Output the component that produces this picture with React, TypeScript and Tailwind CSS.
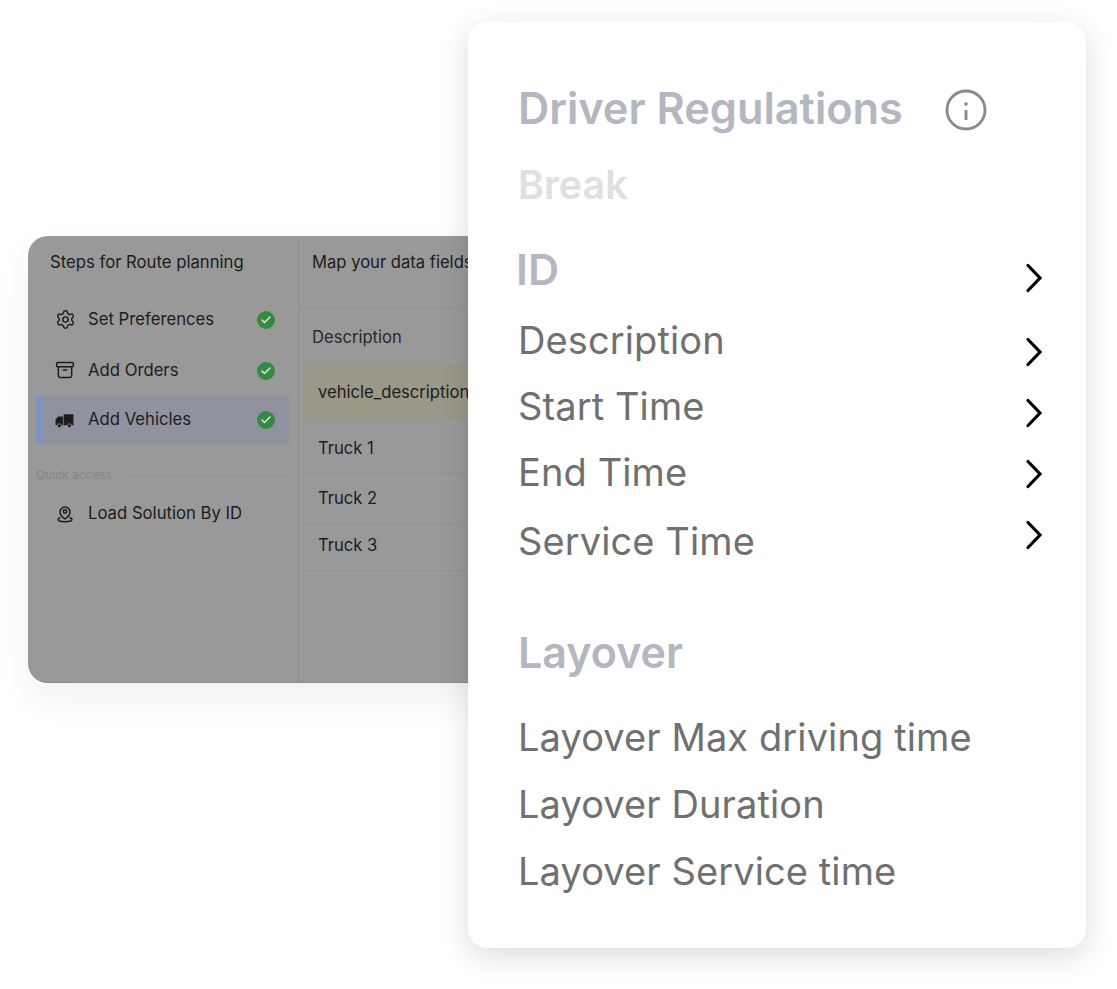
import { Settings, Archive, Check } from 'lucide-react';

const breakFields = [
  { label: 'Description', rowClass: 'mt-[15px]', chevronClass: 'mt-[24px]' },
  { label: 'Start Time', rowClass: '', chevronClass: 'mt-[14px]' },
  { label: 'End Time', rowClass: '', chevronClass: 'mt-[4px]' },
  { label: 'Service Time', rowClass: 'mt-[3px]', chevronClass: '-mt-[12px]' },
];

const layoverFields = ['Layover Max driving time', 'Layover Duration', 'Layover Service time'];

function DoneBadge({ className = '' }: { className?: string }) {
  return (
    <div className={`w-[18px] h-[18px] rounded-full bg-[#348a3f] flex items-center justify-center ${className}`}>
      <Check className="w-3 h-3 text-[#dfe6df]" strokeWidth={3} />
    </div>
  );
}

function Chevron({ className = '' }: { className?: string }) {
  return (
    <svg className={`w-[18px] h-[32px] text-black shrink-0 ${className}`} viewBox="0 0 18 32" fill="none" stroke="currentColor" strokeWidth="3.2" strokeLinecap="round" strokeLinejoin="miter">
      <path d="M3 3.5 15 16 3 28.5" />
    </svg>
  );
}

function TruckIcon() {
  return (
    <svg className="w-[19px] h-[19px] -ml-[1px] text-[#1c1c1c]" viewBox="0 0 18 18" fill="currentColor">
      <path d="M.5 8 3 5.2H7.5V13.5H.5z" />
      <path d="M8.2 3h9.3v10.5H8.2z" />
      <circle cx="4.2" cy="14" r="1.9" stroke="#90939f" strokeWidth="0.8" />
      <circle cx="13.6" cy="14" r="1.9" stroke="#90939f" strokeWidth="0.8" />
    </svg>
  );
}

function PinIcon() {
  return (
    <svg className="w-[18px] h-[18px] text-[#1c1c1c]" viewBox="0 0 18 18" fill="none" stroke="currentColor" strokeWidth="1.5">
      <path d="M9 14c-3-2-5-4-5-7a5 5 0 0 1 10 0c0 3-2 5-5 7z" />
      <circle cx="9" cy="6.5" r="1.7" />
      <path d="M4.5 12.5C3 13 2 13.7 2 14.6c0 1.3 3 2.2 7 2.2s7-.9 7-2.2c0-.9-1-1.6-2.5-2.1" />
    </svg>
  );
}

function StepList() {
  return (
    <div className="w-[271px] shrink-0 border-r border-[#8f8f8f] h-full text-[16.7px] text-[#1c1c1c]">
      <div className="h-[51px] mr-[9px] border-b border-[#949494] pl-[22px] pt-[4px] flex items-center">
        Steps for Route planning
      </div>
      <div className="h-[48px] mt-[8px] flex items-center pl-[28px] pr-[23px]">
        <Settings className="w-[21px] h-[21px] -ml-[1px] -mr-[2px]" strokeWidth={1.6} />
        <span className="ml-[14px] flex-1 pt-[1px]">Set Preferences</span>
        <DoneBadge className="mt-[2px]" />
      </div>
      <div className="h-[48px] mt-[3px] flex items-center pl-[28px] pr-[23px]">
        <Archive className="w-[20px] h-[20px] -ml-[1px] -mr-[1px]" strokeWidth={1.8} />
        <span className="ml-[14px] flex-1 pt-[2px]">Add Orders</span>
        <DoneBadge className="mt-[2px]" />
      </div>
      <div className="ml-[8px] mr-[8px] mt-[2px] h-[48px] bg-[#90939f] border-l-[7px] border-[#7f95bf] flex items-center pl-[13px] pr-[15px]">
        <TruckIcon />
        <span className="ml-[14px] flex-1">Add Vehicles</span>
        <DoneBadge />
      </div>
      <div className="ml-[8px] mr-[7px] mt-[23px] flex items-center">
        <span className="text-[12px] leading-[16px] text-[#858585]">Quick access</span>
        <div className="flex-1 ml-[11px] border-t border-[#929292]" />
      </div>
      <div className="mt-[18px] pl-[28px] flex items-center">
        <PinIcon />
        <span className="ml-[14px]">Load Solution By ID</span>
      </div>
    </div>
  );
}

function DataTable() {
  return (
    <div className="flex-1 min-w-0 whitespace-nowrap text-[16.6px] text-[#1c1c1c]">
      <div className="h-[73px] border-b border-[#929292] pl-[13px] pt-[14px] leading-[24px]">
        Map your data fields
      </div>
      <div className="pl-[13px] pt-[2px] h-[55px] flex items-center text-[#2a2a2a]">Description</div>
      <div className="ml-[5px] h-[56px] bg-[#9a9888] rounded-[3px] pl-[14px] flex items-center">
        vehicle_description
      </div>
      <div className="ml-[5px] pl-[14px] h-[54px] pt-[4px] border-b border-[#929292] flex items-center">
        Truck 1
      </div>
      <div className="ml-[5px] pl-[14px] h-[51px] pb-[2px] border-b border-[#929292] flex items-center">
        Truck 2
      </div>
      <div className="ml-[5px] pl-[14px] h-[46px] pb-[5px] border-b border-[#929292] flex items-center">
        Truck 3
      </div>
    </div>
  );
}

export default function App() {
  return (
    <div className="relative w-[1117px] h-[989px] bg-white overflow-hidden font-['Inter',sans-serif] pt-[236px] pl-[28px]">
      {/* window behind */}
      <div className="w-[470px] h-[447px] bg-[#999999] border-b border-[#8a8a8a] rounded-[20px] flex overflow-hidden shadow-[0_16px_36px_rgba(0,0,0,0.06)]">
        <StepList />
        <DataTable />
      </div>

      {/* front card */}
      <div className="absolute left-[468px] top-[22px] w-[618px] h-[926px] bg-white rounded-[20px] shadow-[0_8px_30px_rgba(0,0,0,0.14)] pl-[50px] pr-[43px] pt-[58px]">
        <div className="flex items-center h-[56px]">
          <span className="text-[43.3px] leading-[56px] font-semibold text-[#b4b6c0] whitespace-nowrap">Driver Regulations</span>
          <svg className="ml-[42px] w-[42px] h-[42px] mt-[3px] text-[#8a8a8a]" viewBox="0 0 42 42" fill="none" stroke="currentColor">
            <circle cx="21" cy="21" r="19" strokeWidth="2.8" />
            <path d="M21 21v10" strokeWidth="2.8" />
            <circle cx="21" cy="15" r="1.8" fill="currentColor" stroke="none" />
          </svg>
        </div>
        <div className="mt-[26px] text-[39.5px] leading-[46px] font-semibold text-[#e0e0e0]">Break</div>
        <div className="mt-[38px] -ml-[2px] flex items-center justify-between h-[46px]">
          <span className="text-[43px] leading-[46px] font-semibold text-[#b4b6c0]">ID</span>
          <Chevron className="mt-[18px]" />
        </div>
        {breakFields.map((f) => (
          <div key={f.label} className={`${f.rowClass} h-[66px] flex items-center justify-between`}>
            <span className="text-[38px] leading-[46px] tracking-[0.1px] text-[#707070]">{f.label}</span>
            <Chevron className={f.chevronClass} />
          </div>
        ))}
        <div className="mt-[53px] text-[43px] leading-[50px] font-semibold text-[#b4b6c0]">Layover</div>
        <div className="mt-[27px] flex flex-col">
          {layoverFields.map((l) => (
            <div key={l} className="h-[67px] flex items-center text-[38px] tracking-[0.1px] text-[#707070]">
              {l}
            </div>
          ))}
        </div>
      </div>
    </div>
  );
}
